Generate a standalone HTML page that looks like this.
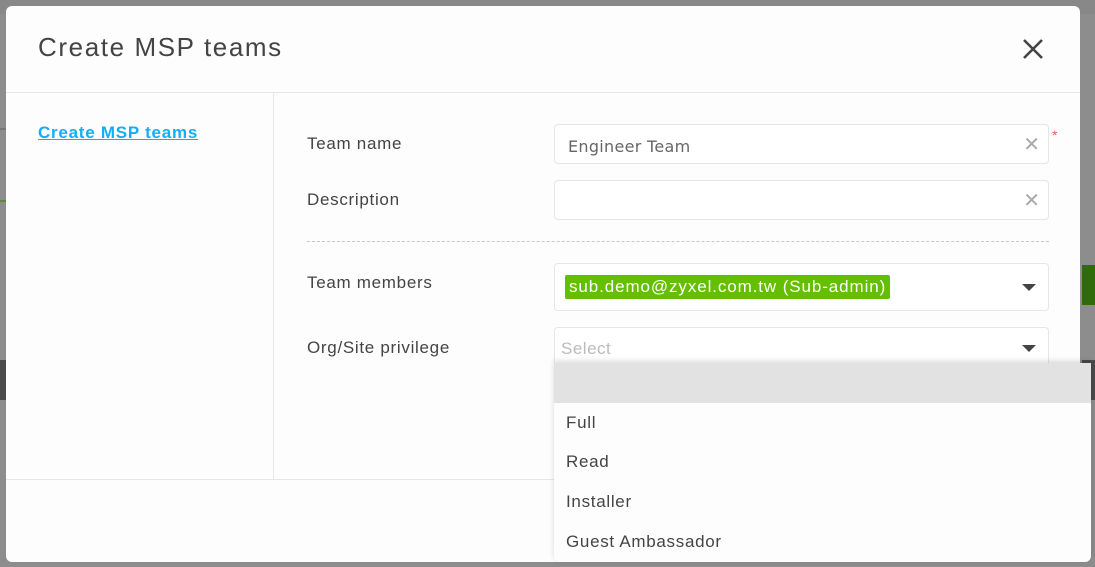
<!DOCTYPE html>
<html><head><style>
body{margin:0;width:1095px;height:567px;background:#8d8d8d;position:relative;overflow:hidden;font-family:"Liberation Sans",sans-serif;}
.abs{position:absolute}
.modal{left:6px;top:6px;width:1074px;height:556px;background:#fdfdfd;border-radius:6px;}
.lbl{font-size:17px;color:#444;letter-spacing:0.7px}
.inp{position:absolute;left:554px;width:493px;border:1px solid #e6e6e6;border-radius:4px;background:#fff;}
.x{position:absolute;right:8px;color:#aaa;font-size:20px;}
.tri{position:absolute;right:12px;width:0;height:0;border-left:7px solid transparent;border-right:7px solid transparent;border-top:7px solid #444;}
.opt{position:absolute;left:566px;font-size:17px;color:#444;letter-spacing:0.7px}
</style></head><body>
<div class="abs" style="left:0;top:0;width:1095px;height:14px;background:#888"></div>
<div class="abs" style="left:0;top:128px;width:6px;height:2px;background:#777"></div>
<div class="abs" style="left:0;top:200px;width:6px;height:2px;background:#5a8a3a"></div>
<div class="abs" style="left:0;top:360px;width:6px;height:40px;background:#4a4a4a"></div>
<div class="abs" style="left:1082px;top:265px;width:13px;height:40px;background:#2f6b0a"></div>
<div class="abs" style="left:1082px;top:360px;width:13px;height:40px;background:#4a4a4a"></div>
<div class="abs modal"></div>
<div class="abs" style="left:38px;top:32px;font-size:26px;color:#444;letter-spacing:1.6px">Create MSP teams</div>
<svg class="abs" style="left:1022px;top:38px" width="22" height="22"><path d="M2 2L20 20M20 2L2 20" stroke="#444" stroke-width="2.6"/></svg>
<div class="abs" style="left:6px;top:92px;width:1074px;height:1px;background:#e6e6e6"></div>
<div class="abs" style="left:273px;top:93px;width:1px;height:386px;background:#e9e9e9"></div>
<div class="abs" style="left:6px;top:479px;width:1074px;height:1px;background:#e6e6e6"></div>
<div class="abs" style="left:38px;top:123px;font-size:17px;font-weight:bold;color:#13aef5;text-decoration:underline;letter-spacing:0.75px">Create MSP teams</div>
<div class="abs lbl" style="left:307px;top:134px">Team name</div>
<div class="abs lbl" style="left:307px;top:190px">Description</div>
<div class="abs lbl" style="left:307px;top:273px">Team members</div>
<div class="abs lbl" style="left:307px;top:338px">Org/Site privilege</div>
<div class="inp" style="top:124px;height:38px"><span class="abs" style="left:13px;top:12px;color:#666;font-family:'DejaVu Sans',sans-serif;font-size:16px;letter-spacing:0.3px">Engineer Team</span><span class="x" style="top:7px">✕</span></div>
<div class="abs" style="left:1052px;top:127px;color:#f55;font-size:14px">*</div>
<div class="inp" style="top:180px;height:38px"><span class="x" style="top:7px">✕</span></div>
<div class="abs" style="left:307px;top:241px;width:742px;border-top:1px dashed #c8c8c8"></div>
<div class="inp" style="top:263px;height:46px"><span class="abs" style="left:10px;top:11px;height:24px;line-height:24px;padding:0 4px;background:#64bf00;color:#fff;border-radius:2px;font-size:17px;letter-spacing:0.9px">sub.demo@zyxel.com.tw (Sub-admin)</span><span class="tri" style="top:20px"></span></div>
<div class="inp" style="top:327px;height:46px;border-bottom:none"><span class="abs" style="left:6px;top:11px;font-size:17px;color:#bbb;letter-spacing:0.5px">Select</span><span class="tri" style="top:17px"></span></div>
<div class="abs" style="left:554px;top:363px;width:537px;height:199px;background:#fdfdfd;border-radius:0 0 6px 6px;box-shadow:0 -2px 6px rgba(0,0,0,.15)"></div>
<div class="abs" style="left:554px;top:363px;width:537px;height:40px;background:#e2e2e2"></div>
<div class="opt" style="top:413px">Full</div>
<div class="opt" style="top:452px">Read</div>
<div class="opt" style="top:492px">Installer</div>
<div class="opt" style="top:532px">Guest Ambassador</div>
</body></html>
